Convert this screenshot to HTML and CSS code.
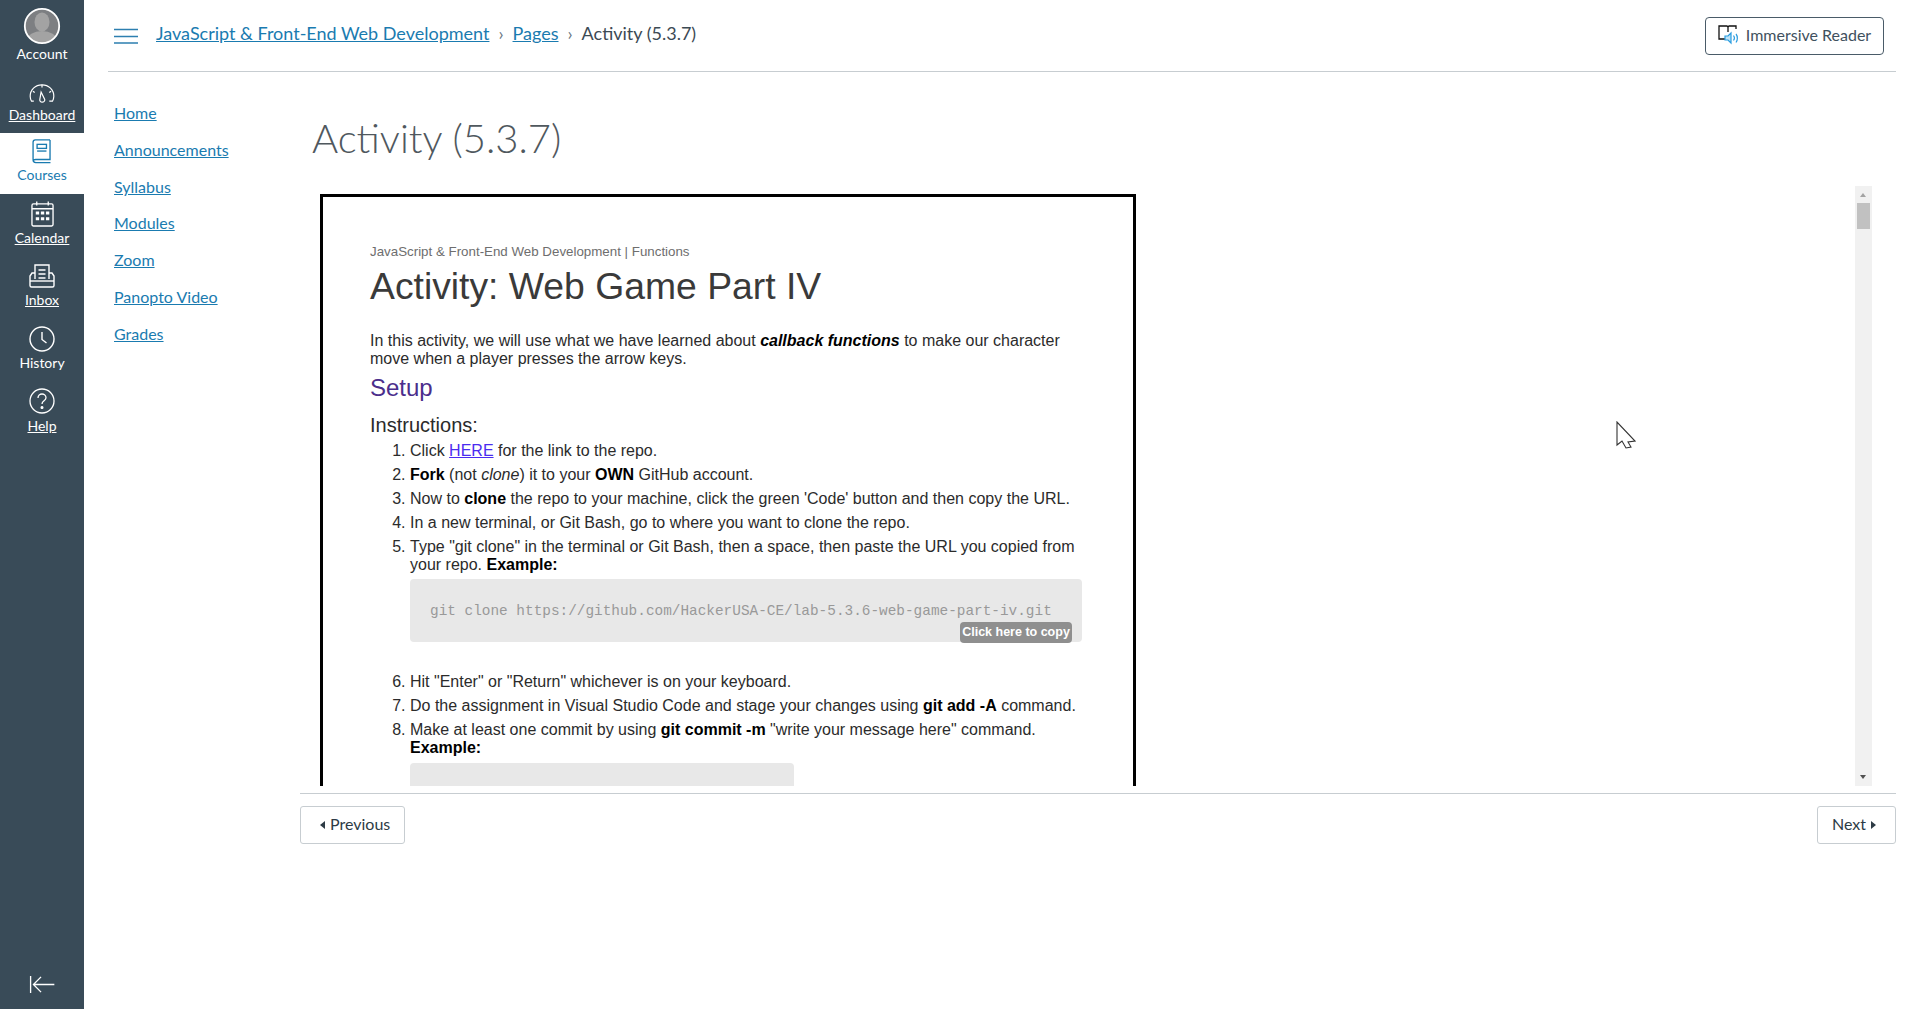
FILE: index.html
```html
<!DOCTYPE html>
<html lang="en">
<head>
<meta charset="utf-8">
<title>Activity (5.3.7)</title>
<link rel="stylesheet" href="styles.css">
</head>
<body>
<aside class="nav">
  <a class="nav-item nav-account">
    <svg class="avatar" viewBox="0 0 38 38"><defs><clipPath id="c"><circle cx="19" cy="19" r="17"/></clipPath></defs><circle cx="19" cy="19" r="17" fill="#7d7f82"/><g clip-path="url(#c)"><ellipse cx="19" cy="15" rx="7.500" ry="9.500" fill="#a3a3a3"/><ellipse cx="19" cy="33" rx="15" ry="9" fill="#a3a3a3"/></g><circle cx="19" cy="19" r="17.200" fill="none" stroke="#fff" stroke-width="1.800"/></svg>
    <span class="nav-label">Account</span>
  </a>
  <a class="nav-item nav-dash">
    <svg class="nav-icon-dash" viewBox="0 0 28 22" fill="none" stroke="#fff" stroke-width="1.300"><path d="M5 20H2.500C1.500 18 1 16.500 1 14.500 1 7.500 6.500 2 14 2s13 5.500 13 12.500c0 2-.5 3.500-1.500 5.500H22"/><path d="M13 10l4 8c.4 1.700-1.100 3-2.800 3s-3-1.300-2.600-3z"/><path d="M14 2v3M4 9l2 1.500M24 9l-2 1.500"/></svg>
    <span class="nav-label nav-link">Dashboard</span>
  </a>
  <a class="nav-item nav-active">
    <svg class="nav-icon-courses" viewBox="0 0 22 28" fill="none" stroke="#1a7bb0" stroke-width="1.500"><path d="M20 1H3.500C2 1 1 2 1 3.500V23c0 2 1 3.500 3 3.500h16.500M20 1v22H4c-2 0-3 1-3 2"/><rect x="5.500" y="6" width="10.500" height="4.500"/><path d="M5.500 13.500H16"/></svg>
    <span class="nav-label">Courses</span>
  </a>
  <a class="nav-item nav-cal">
    <svg class="nav-icon-cal" viewBox="0 0 24 27" fill="none" stroke="#fff"><rect x="1" y="3" width="22" height="23" rx="1.500" stroke-width="1.400"/><path d="M1 8h22M6 .5v4M18 .5v4" stroke-width="1.400"/><path fill="#fff" stroke="none" d="M5 11h3.500v3H5zM10.300 11h3.500v3h-3.500zM15.600 11h3.500v3h-3.500zM5 17h3.500v3H5zM10.300 17h3.500v3h-3.500zM15.600 17h3.500v3h-3.500z"/></svg>
    <span class="nav-label nav-link">Calendar</span>
  </a>
  <a class="nav-item nav-inbox">
    <svg class="nav-icon-inbox" viewBox="0 0 26 24" fill="none" stroke="#fff" stroke-width="1.400"><path d="M6 15V1h14v14"/><path d="M9.500 6h7M9.500 10h7M9.500 14h7" stroke-width="1.600"/><path d="M6 9H3L1 12v9.500c0 1 .5 1.500 1.500 1.500h21c1 0 1.500-.5 1.500-1.500V12l-2-3h-3"/><path d="M1 17h24"/></svg>
    <span class="nav-label nav-link">Inbox</span>
  </a>
  <a class="nav-item nav-hist">
    <svg class="nav-icon-round" viewBox="0 0 26 26" fill="none" stroke="#fff" stroke-width="1.400"><circle cx="13" cy="13" r="12"/><path d="M13 6v7.500l4.500 3.500"/></svg>
    <span class="nav-label">History</span>
  </a>
  <a class="nav-item">
    <svg class="nav-icon-round" viewBox="0 0 26 26" fill="none" stroke="#fff" stroke-width="1.300"><circle cx="13" cy="13" r="12"/><path d="M9 10c0-2.500 2-4 4-4s4 1.500 4 3.800c0 3-4 3-4 6.200"/><circle cx="13" cy="19.500" r=".9" fill="#fff"/></svg>
    <span class="nav-label nav-link">Help</span>
  </a>
  <svg class="collapse" viewBox="0 0 26 20" fill="none" stroke="#fff" stroke-width="1.400"><path d="M1 1v18M26 10H4M12 2l-8 8 8 8"/></svg>
</aside>

<div class="page">
  <header class="topbar">
    <svg class="burger" viewBox="0 0 24 16" fill="none" stroke="#2d7fb0" stroke-width="1.500"><path d="M0 1.500h24M0 8.500h24M0 15h24"/></svg>
    <nav class="crumbs">
      <a class="lnk">JavaScript &amp; Front-End Web Development</a>
      <span class="sep">›</span>
      <a class="lnk">Pages</a>
      <span class="sep">›</span>
      <span class="crumb-cur">Activity (5.3.7)</span>
    </nav>
    <button class="reader">
      <svg class="reader-icon" viewBox="0 0 22 20" fill="none"><path d="M8 14H1V1h8l1 1 1-1h7v3M10 2v5" stroke="#111" stroke-width="1.300"/><path d="M7 11h3l3-3v10l-3-3H7z" fill="#bfe3f7" stroke="#2a9de0" stroke-width="1.200"/><path d="M15.500 10.500c1 1.300 1 3.700 0 5M18 9c1.800 2.200 1.800 6.200 0 8.500" stroke="#2a9de0" stroke-width="1.200"/></svg>
      Immersive Reader
    </button>
  </header>

  <div class="body-row">
    <nav class="side">
      <a class="lnk">Home</a>
      <a class="lnk">Announcements</a>
      <a class="lnk">Syllabus</a>
      <a class="lnk">Modules</a>
      <a class="lnk">Zoom</a>
      <a class="lnk">Panopto Video</a>
      <a class="lnk">Grades</a>
    </nav>
    <main class="content">
      <h1 class="title">Activity (5.3.7)</h1>
      <div class="frame-row">
        <div class="frame">
          <div class="sheet">
            <p class="kicker">JavaScript &amp; Front-End Web Development | Functions</p>
            <h2 class="h-main">Activity: Web Game Part IV</h2>
            <p class="intro">In this activity, we will use what we have learned about <b><i>callback functions</i></b> to make our character move when a player presses the arrow keys.</p>
            <h3 class="h-setup">Setup</h3>
            <h4 class="h-inst">Instructions:</h4>
            <ol class="steps">
              <li>Click <a class="here">HERE</a> for the link to the repo.</li>
              <li><b>Fork</b> (not <i>clone</i>) it to your <b>OWN</b> GitHub account.</li>
              <li>Now to <b>clone</b> the repo to your machine, click the green 'Code' button and then copy the URL.</li>
              <li>In a new terminal, or Git Bash, go to where you want to clone the repo.</li>
              <li>Type "git clone" in the terminal or Git Bash, then a space, then paste the URL you copied from your repo. <b>Example:</b>
                <div class="code"><code class="code-text">git clone https://github.com/HackerUSA-CE/lab-5.3.6-web-game-part-iv.git</code><span class="copy">Click here to copy</span></div>
              </li>
              <li>Hit "Enter" or "Return" whichever is on your keyboard.</li>
              <li>Do the assignment in Visual Studio Code and stage your changes using <b>git add -A</b> command.</li>
              <li>Make at least one commit by using <b>git commit -m</b> "write your message here" command. <b>Example:</b>
                <div class="code code-short"></div>
              </li>
            </ol>
          </div>
        </div>
        <div class="scrollbar">
          <span class="arrow-up"></span>
          <span class="thumb"></span>
          <span class="arrow-down"></span>
        </div>
      </div>
      <footer class="pager">
        <a class="pg-btn pg-prev"><span class="tri-l"></span>Previous</a>
        <a class="pg-btn pg-next">Next<span class="tri-r"></span></a>
      </footer>
    </main>
  </div>
</div>
<svg class="cursor" viewBox="0 0 20 28"><path d="M1 1V24L6 20l4 7 5-1-3-5 7-1z" fill="#fff" stroke="#333" stroke-width="1.100"/></svg>
</body>
</html>
```
FILE: styles.css
```css
* { box-sizing: border-box; }
html, body { margin: 0; height: 100%; }
body { display: flex; height: 1009px; overflow: hidden; font-family: Lato, "Open Sans", sans-serif; color: #2d3b45; background: #fff; }

.nav { width: 84px; flex: none; background: #394b58; display: flex; flex-direction: column; align-items: stretch; position: relative; color: #fff; }
.nav-item { display: flex; flex-direction: column; align-items: center; height: 62px; padding-top: 8px; color: #fff; font-size: 14px; line-height: 16px; }
.nav-account { height: 62px; padding-top: 7px; }
.nav-dash { height: 71px; padding-top: 21px; }
.nav-active { background: #fff; color: #1a7bb0; height: 61px; padding-top: 6px; }
.nav-active .nav-icon-courses { margin-bottom: 2px; }
.nav-cal { height: 62px; padding-top: 7px; }
.nav-cal .nav-icon-cal { margin-bottom: 2px; }
.nav-inbox { padding-top: 8px; }
.nav-inbox .nav-icon-inbox { margin-bottom: 3px; }
.nav-hist .nav-icon-round { margin-bottom: 2px; }
.nav-link { text-decoration: underline; }
.avatar { width: 38px; height: 38px; }
.nav-label { display: block; margin-top: 1px; }
.nav-icon-dash { width: 26px; height: 20px; margin-bottom: 3px; }
.nav-icon-courses { width: 20px; height: 25px; margin-bottom: 4px; }
.nav-icon-cal { width: 23px; height: 26px; margin-bottom: 3px; }
.nav-icon-inbox { width: 26px; height: 24px; margin-bottom: 4px; }
.nav-icon-round { width: 26px; height: 26px; margin-bottom: 3px; }
.collapse { position: absolute; left: 29px; bottom: 15px; width: 26px; height: 19px; }

.page { flex: 1; min-width: 0; display: flex; flex-direction: column; }
.topbar { height: 72px; margin: 0 24px; border-bottom: 1px solid #c7cdd1; display: flex; align-items: center; padding: 0 0 0 6px; position: relative; }
.burger { width: 24px; height: 16px; margin-top: 1px; margin-right: 18px; }
.crumbs { display: flex; align-items: center; gap: 9px; font-size: 18px; margin-top: -5px; flex: 1; }
.lnk { color: #1a7bb0; text-decoration: underline; }
.sep { color: #6b7780; font-size: 18px; }
.crumb-cur { color: #3c4a54; }
.reader { width: 179px; height: 38px; margin-right: 12px; margin-top: 1px; border: 1px solid #4a5b68; border-radius: 4px; background: #fff; color: #3f515e; font: 16px/20px Lato, sans-serif; display: flex; align-items: center; justify-content: center; gap: 6px; padding: 0 0 2px; }
.reader-icon { width: 22px; height: 20px; }

.body-row { flex: 1; display: flex; min-height: 0; }
.side { width: 216px; flex: none; padding: 31px 0 0 30px; display: flex; flex-direction: column; gap: 17.800px; font-size: 16px; line-height: 19px; }
.content { flex: 1; min-width: 0; margin-right: 24px; }
.title { margin: 41px 0 0 12px; font-size: 40px; font-weight: 300; line-height: 50px; color: #50585e; }
.frame-row { display: flex; height: 600px; margin-top: 23px; padding-right: 24px; }
.frame { flex: 1; min-width: 0; height: 600px; overflow: hidden; padding: 8px 0 0 20px; }
.sheet { width: 816px; height: 900px; border: 3px solid #000; padding: 47px 47px 0 47px; font-family: "Liberation Sans", Arial, sans-serif; font-size: 16px; line-height: 18px; color: #2b2b2b; }
.kicker { margin: 0; font-size: 13.330px; line-height: 15px; color: #6e6e6e; }
.h-main { margin: 5px 0 0; font-size: 37.300px; font-weight: 400; line-height: 44px; color: #3a3a3a; }
.intro { margin: 24px 0 0; }
.intro b { color: #000; }
.h-setup { margin: 6px 0 0; font-size: 24px; font-weight: 400; line-height: 28px; color: #4b2e8c; }
.h-inst { margin: 11px 0 0; font-size: 20px; font-weight: 400; line-height: 24px; color: #2b2b2b; }
.steps { margin: 5px 0 0; padding-left: 40px; }
.steps li { margin-bottom: 6px; }
.steps b { color: #000; }
.here { color: #4a2cf0; text-decoration: underline; }
.code { position: relative; height: 63px; width: 672px; margin: 5px 0 31px; background: #e8e8e8; border-radius: 4px; padding: 23px 20px 0; font-family: "Liberation Mono", monospace; font-size: 14.400px; line-height: 18px; color: #999; white-space: nowrap; }
.code-text { font: inherit; font-weight: 300; }
.code-short { width: 384px; margin: 6px 0 0; }
.copy { position: absolute; right: 10px; bottom: -1px; width: 112px; height: 21px; border-radius: 4px; background: #8f8f8f; color: #fff; font: bold 12.500px/21px "Liberation Sans", sans-serif; text-align: center; }

.scrollbar { width: 17px; height: 600px; background: #f1f1f1; flex: none; position: relative; }
.thumb { position: absolute; left: 2px; top: 17px; width: 13px; height: 26px; background: #c1c1c1; }
.arrow-up, .arrow-down { position: absolute; left: 5px; width: 0; height: 0; border-left: 3.500px solid transparent; border-right: 3.500px solid transparent; }
.arrow-up { top: 7px; border-bottom: 4px solid #a3a3a3; }
.arrow-down { bottom: 7px; border-top: 4px solid #505050; }

.pager { margin-top: 7px; border-top: 1px solid #c7cdd1; padding-top: 12px; display: flex; justify-content: space-between; }
.pg-btn { height: 38px; border: 1px solid #c7cdd1; border-radius: 3px; display: flex; align-items: center; font-size: 16px; color: #2d3b45; padding-bottom: 3px; }
.pg-prev { padding-left: 19px; padding-right: 14px; }
.pg-next { padding-left: 14px; padding-right: 19px; }
.tri-l { width: 0; height: 0; border: 4px solid transparent; border-right: 5px solid #2d3b45; border-left: 0; margin-right: 5px; margin-top: 3px; }
.tri-r { width: 0; height: 0; border: 4px solid transparent; border-left: 5px solid #2d3b45; border-right: 0; margin-left: 5px; margin-top: 3px; }

.cursor { position: absolute; left: 1616px; top: 421px; width: 20px; height: 28px; }
```
